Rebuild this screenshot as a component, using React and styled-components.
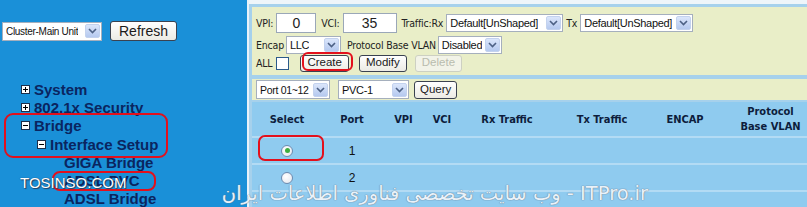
import React from 'react';
import styled, { createGlobalStyle } from 'styled-components';

const GlobalStyle = createGlobalStyle`
  html, body {
    margin: 0;
    padding: 0;
    background: #1a90d8;
  }
  body {
    width: 807px;
    height: 207px;
    overflow: hidden;
    font-family: "Liberation Sans", Arial, sans-serif;
  }
`;

const Page = styled.div`
  position: relative;
  display: flex;
  width: 807px;
  height: 207px;
  overflow: hidden;
`;

/* ---------- left side ---------- */

const Sidebar = styled.aside`
  width: 247px;
  flex: none;
  background: #1a90d8;
  padding: 21px 0 0 2px;
  box-sizing: border-box;
`;

const UnitBar = styled.div`
  display: flex;
  align-items: center;
  gap: 8px;
`;

const Tree = styled.ul`
  list-style: none;
  margin: 39px 0 0 0;
  padding: 0;
`;

const TreeItem = styled.li`
  display: flex;
  align-items: center;
  height: 18.3px;
  padding-left: ${(p) => p.$indent}px;
  font-size: 15px;
  font-weight: bold;
  color: #0a2560;
  white-space: nowrap;
`;

const Toggle = styled.span`
  width: 7px;
  height: 7px;
  margin-right: 4px;
  background: #fff;
  border: 1px solid #1c2e4a;
  position: relative;
  flex: none;
  &::before {
    content: '';
    position: absolute;
    left: 1px;
    right: 1px;
    top: 3px;
    height: 1px;
    background: #000;
  }
  &::after {
    content: '';
    display: ${(p) => (p.$open ? 'none' : 'block')};
    position: absolute;
    top: 1px;
    bottom: 1px;
    left: 3px;
    width: 1px;
    background: #000;
  }
`;

/* ---------- right side ---------- */

const Main = styled.main`
  flex: 1;
  display: flex;
  flex-direction: column;
  border-left: 2px solid #e8f2f9;
  background: #eef5fa;
  padding-top: 4px;
`;

const Content = styled.div`
  flex: 1;
  display: flex;
  flex-direction: column;
  border-left: 3px solid #a6d1ec;
  border-top: 3px solid #a6d1ec;
  background: #8fcbef;
`;

const FormPanel = styled.div`
  background: #e9eec8;
  padding: 4px 0 3px 4px;
  display: flex;
  flex-direction: column;
  font-size: 11px;
  color: #1d2433;
`;

const FormRow = styled.div`
  display: flex;
  align-items: center;
  height: ${(p) => p.$h || 19}px;
  gap: ${(p) => p.$gap || 4}px;
`;

const Label = styled.span`
  font-family: "DejaVu Sans Condensed", "Liberation Sans", sans-serif;
  font-size: 10.5px;
  letter-spacing: -0.2px;
  color: #222;
  margin-left: ${(p) => p.$ml || 0}px;
`;

const TextBox = styled.div`
  width: ${(p) => p.$w}px;
  height: 20px;
  box-sizing: border-box;
  background: #fff;
  border: 1px solid #9aa7b8;
  display: flex;
  align-items: center;
  justify-content: center;
  font-size: 14px;
  color: #222;
`;

const SelectBox = styled.div`
  width: ${(p) => p.$w}px;
  height: ${(p) => p.$h || 18}px;
  box-sizing: border-box;
  background: #fff;
  border: 1px solid #a5afbd;
  display: flex;
  align-items: center;
  justify-content: space-between;
  gap: 1px;
  padding: 0 1px 0 3px;
  font-size: ${(p) => p.$fs || 11}px;
  color: #111;
  white-space: nowrap;
  flex: none;
  overflow: hidden;
  span:first-child {
    overflow: hidden;
    letter-spacing: -0.3px;
  }
`;

const ArrowBox = styled.span`
  width: 15px;
  height: 14px;
  background: linear-gradient(#dbe6fb, #b5c9ef);
  border: 1px solid #c3d2ee;
  border-radius: 2px;
  box-sizing: border-box;
  display: flex;
  align-items: center;
  justify-content: center;
  flex: none;
`;

const Button = styled.button`
  height: ${(p) => p.$h || 17}px;
  padding: 0 ${(p) => p.$px || 6}px;
  margin-left: ${(p) => p.$ml || 0}px;
  font-family: "Liberation Sans", Arial, sans-serif;
  font-size: ${(p) => p.$fs || 11.5}px;
  color: ${(p) => (p.disabled ? '#b9bcae' : '#1a1a1a')};
  background: ${(p) => (p.disabled ? '#f2f3e8' : 'linear-gradient(#ffffff, #ecebe4)')};
  border: 1px solid ${(p) => (p.disabled ? '#cdd0c2' : '#3b4250')};
  border-radius: 3px;
  line-height: 1;
  flex: none;
`;

const CheckBox = styled.span`
  width: 13px;
  height: 13px;
  box-sizing: border-box;
  background: #fff;
  border: 1px solid #2c5a8a;
`;

const Separator = styled.div`
  height: 4px;
  background: #a6d1ec;
`;

const QueryRow = styled.div`
  background: #e9eec8;
  display: flex;
  align-items: center;
  gap: 8px;
  height: 21px;
  padding-left: 4px;
  border-bottom: 2px solid #a6d1ec;
`;

const Grid = styled.div`
  display: grid;
  grid-template-columns: 70px 60px 43px 34px 96px 94px 72px 83px;
  align-items: center;
  height: ${(p) => p.$h}px;
  border-bottom: ${(p) => (p.$line ? '2px solid #b3dbf4' : 'none')};
  font-size: 11px;
`;

const HeadCell = styled.div`
  font-family: "DejaVu Sans Condensed", "Liberation Sans", sans-serif;
  font-weight: bold;
  font-size: 11px;
  color: #0d1d3c;
  text-align: center;
  line-height: 15px;
  padding-left: ${(p) => p.$pl || 0}px;
`;

const Cell = styled.div`
  text-align: center;
  font-size: 12px;
  color: #111;
  display: flex;
  justify-content: center;
`;

const Radio = styled.span`
  width: 12px;
  height: 12px;
  border-radius: 50%;
  box-sizing: border-box;
  border: 1px solid #6d8bb0;
  background: radial-gradient(circle at 40% 35%, #ffffff, #e2e6ee);
  display: flex;
  align-items: center;
  justify-content: center;
  &::after {
    content: '';
    display: ${(p) => (p.$checked ? 'block' : 'none')};
    width: 5px;
    height: 5px;
    border-radius: 50%;
    background: #3fae3f;
  }
`;

/* ---------- overlays ---------- */

const Ring = styled.div`
  position: absolute;
  left: ${(p) => p.$x}px;
  top: ${(p) => p.$y}px;
  width: ${(p) => p.$w}px;
  height: ${(p) => p.$h}px;
  box-sizing: border-box;
  border: 2px solid #e3101c;
  border-radius: ${(p) => p.$r || 8}px;
  pointer-events: none;
`;

const SiteMark = styled.div`
  position: absolute;
  left: 20px;
  top: 174px;
  font-size: 15px;
  color: #fff;
  text-shadow: 0 0 1px #1c3050, 1px 1px 1px #2a4060;
`;

const Watermark = styled.div`
  position: absolute;
  right: 159px;
  top: 182px;
  direction: rtl;
  white-space: nowrap;
  font-family: "DejaVu Sans", "Liberation Sans", sans-serif;
  font-size: 19.5px;
  color: #e9f2fa;
  text-shadow: 0 0 1px #6c7f92, 0 0 1px #6c7f92;
`;

const Chevron = () => (
  <svg width="9" height="6" viewBox="0 0 9 6">
    <path d="M1 1 L4.5 4.5 L8 1" fill="none" stroke="#4d6185" strokeWidth="1.6" />
  </svg>
);

const Dropdown = ({ w, h, fs, children }) => (
  <SelectBox $w={w} $h={h} $fs={fs}>
    <span>{children}</span>
    <ArrowBox>
      <Chevron />
    </ArrowBox>
  </SelectBox>
);

const tree = [
  { label: 'System', indent: 19, toggle: 'closed' },
  { label: '802.1x Security', indent: 19, toggle: 'closed' },
  { label: 'Bridge', indent: 19, toggle: 'open' },
  { label: 'Interface Setup', indent: 35, toggle: 'open' },
  { label: 'GIGA Bridge', indent: 62 },
  { label: 'ADSL PVC', indent: 62 },
  { label: 'ADSL Bridge', indent: 62 },
];

const columns = ['Select', 'Port', 'VPI', 'VCI', 'Rx Traffic', 'Tx Traffic', 'ENCAP'];

const rows = [
  { port: 1, checked: true },
  { port: 2, checked: false },
];

export default function App() {
  return (
    <>
      <GlobalStyle />
      <Page>
        <Sidebar>
          <UnitBar>
            <Dropdown w={100} h={19} fs={10}>Cluster-Main Unit</Dropdown>
            <Button $h={20} $px={8} $fs={14}>Refresh</Button>
          </UnitBar>
          <Tree>
            {tree.map((t) => (
              <TreeItem key={t.label} $indent={t.indent}>
                {t.toggle && <Toggle $open={t.toggle === 'open'} />}
                {t.label}
              </TreeItem>
            ))}
          </Tree>
        </Sidebar>

        <Main>
          <Content>
            <FormPanel>
              <FormRow $h={24} $gap={3}>
                <Label>VPI:</Label>
                <TextBox $w={40}>0</TextBox>
                <Label $ml={2}>VCI:</Label>
                <TextBox $w={54}>35</TextBox>
                <Label $ml={2}>Traffic:Rx</Label>
                <Dropdown w={117}>Default[UnShaped]</Dropdown>
                <Label>Tx</Label>
                <Dropdown w={113}>Default[UnShaped]</Dropdown>
              </FormRow>
              <FormRow $h={19} $gap={2}>
                <Label>Encap</Label>
                <Dropdown w={55}>LLC</Dropdown>
                <Label $ml={4}>Protocol Base VLAN</Label>
                <Dropdown w={64}>Disabled</Dropdown>
              </FormRow>
              <FormRow $h={18} $gap={4}>
                <Label>ALL</Label>
                <CheckBox />
                <Button $ml={7}>Create</Button>
                <Button $ml={6}>Modify</Button>
                <Button $ml={4} disabled>Delete</Button>
              </FormRow>
            </FormPanel>
            <Separator />
            <QueryRow>
              <Dropdown w={74} h={19} fs={10.5}>Port 01~12</Dropdown>
              <Dropdown w={71} h={19}>PVC-1</Dropdown>
              <Button $h={18} $px={5} $ml={-3}>Query</Button>
            </QueryRow>

            <Grid $h={34} $line>
              {columns.map((c) => (
                <HeadCell key={c}>{c}</HeadCell>
              ))}
              <HeadCell $pl={16}>
                Protocol
                <br />
                Base VLAN
              </HeadCell>
            </Grid>
            {rows.map((r) => (
              <Grid key={r.port} $h={25} $line>
                <Cell>
                  <Radio $checked={r.checked} />
                </Cell>
                <Cell>{r.port}</Cell>
                <Cell />
                <Cell />
                <Cell />
                <Cell />
                <Cell />
                <Cell />
              </Grid>
            ))}
          </Content>
        </Main>

        <Ring $x={4} $y={113} $w={164} $h={45} $r={9} />
        <Ring $x={52} $y={171} $w={104} $h={20} $r={8} />
        <Ring $x={302} $y={52} $w={51} $h={19} $r={6} />
        <Ring $x={258} $y={135} $w={66} $h={26} $r={7} />

        <SiteMark>TOSINSO.COM</SiteMark>
        <Watermark>ITPro.ir - وب سایت تخصصی فناوری اطلاعات ایران</Watermark>
      </Page>
    </>
  );
}
